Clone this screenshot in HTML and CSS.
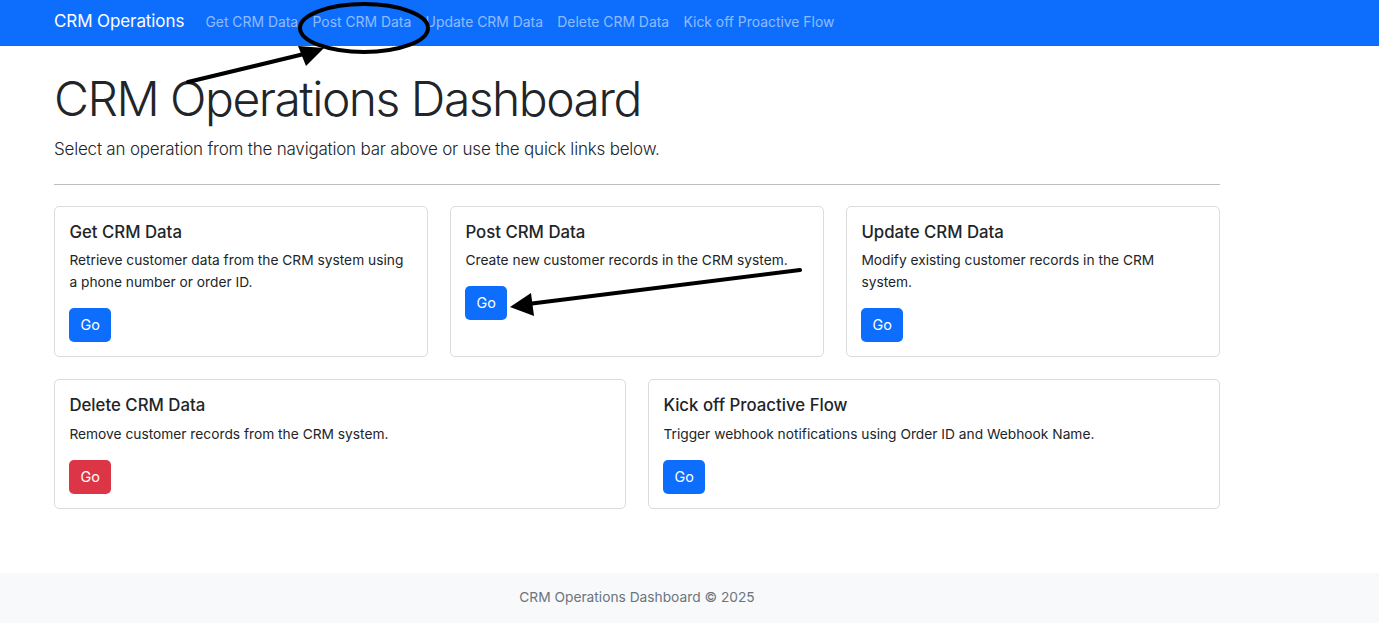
FILE: index.html
```html
<!DOCTYPE html>
<html lang="en">
<head>
<meta charset="utf-8">
<title>CRM Operations Dashboard</title>
<link rel="stylesheet" href="styles.css">
</head>
<body>
<nav class="navbar">
  <div class="nav-inner">
    <a class="brand" href="#">CRM Operations</a>
    <ul class="nav-links">
      <li><a href="#">Get CRM Data</a></li>
      <li><a href="#">Post CRM Data</a></li>
      <li><a href="#">Update CRM Data</a></li>
      <li><a href="#">Delete CRM Data</a></li>
      <li><a href="#">Kick off Proactive Flow</a></li>
    </ul>
  </div>
</nav>

<main class="container">
  <h1 class="display">CRM Operations Dashboard</h1>
  <p class="lead">Select an operation from the navigation bar above or use the quick links below.</p>
  <hr class="divider">

  <div class="row row-3">
    <div class="card">
      <h5 class="card-title">Get CRM Data</h5>
      <p class="card-text">Retrieve customer data from the CRM system using a phone number or order ID.</p>
      <a class="btn btn-primary" href="#">Go</a>
    </div>
    <div class="card">
      <h5 class="card-title">Post CRM Data</h5>
      <p class="card-text">Create new customer records in the CRM system.</p>
      <a class="btn btn-primary" href="#">Go</a>
    </div>
    <div class="card">
      <h5 class="card-title">Update CRM Data</h5>
      <p class="card-text">Modify existing customer records in the CRM system.</p>
      <a class="btn btn-primary" href="#">Go</a>
    </div>
  </div>

  <div class="row row-2">
    <div class="card">
      <h5 class="card-title">Delete CRM Data</h5>
      <p class="card-text">Remove customer records from the CRM system.</p>
      <a class="btn btn-danger" href="#">Go</a>
    </div>
    <div class="card">
      <h5 class="card-title">Kick off Proactive Flow</h5>
      <p class="card-text">Trigger webhook notifications using Order ID and Webhook Name.</p>
      <a class="btn btn-primary" href="#">Go</a>
    </div>
  </div>
</main>

<footer class="footer">
  <div class="footer-inner">CRM Operations Dashboard &copy; 2025</div>
</footer>

<svg class="annotations" width="1379" height="639" viewBox="0 0 1379 639" aria-hidden="true">
  <ellipse cx="364" cy="28" rx="64" ry="24" fill="none" stroke="#000" stroke-width="4"/>
  <line x1="188" y1="82" x2="304" y2="54" stroke="#000" stroke-width="4" stroke-linecap="round"/>
  <polygon points="324,48 298,46 306,66" fill="#000"/>
  <line x1="800" y1="270" x2="528" y2="304" stroke="#000" stroke-width="4" stroke-linecap="round"/>
  <polygon points="510,307 531,293 534,316" fill="#000"/>
</svg>
</body>
</html>
```

FILE: styles.css
```css
* { box-sizing: border-box; }

html, body {
  margin: 0;
  padding: 0;
  background: #fff;
}

body {
  font-family: Inter, "Noto Sans", "Liberation Sans", sans-serif;
  color: #212529;
  font-size: 14.4px;
  line-height: 1.5;
  position: relative;
  min-height: 639px;
}

a { text-decoration: none; }

.navbar {
  background: #0d6efd;
  height: 46px;
}

.nav-inner {
  margin-left: 54px;
  height: 44px;
  display: flex;
  align-items: center;
}

.brand {
  color: #fff;
  font-size: 17px;
  font-weight: 400;
  margin-right: 14px;
  letter-spacing: -0.1px;
}

.nav-links {
  list-style: none;
  margin: 0;
  padding: 0;
  display: flex;
}

.nav-links a {
  display: block;
  padding: 7px 7.2px;
  color: rgba(255, 255, 255, 0.55);
  font-size: 13.9px;
}

.container {
  width: 1166px;
  margin-left: 54px;
  padding-top: 23px;
  padding-bottom: 1px;
}

.display {
  font-size: 48px;
  font-weight: 300;
  line-height: 60px;
  margin: 0 0 7.6px 0;
  letter-spacing: -1.5px;
}

.lead {
  font-size: 17px;
  font-weight: 300;
  line-height: 1.5;
  margin: 0;
  letter-spacing: -0.2px;
}

.divider {
  margin: 21.6px 0;
  border: 0;
  border-top: 1px solid #bcbebf;
  height: 0;
}

.row {
  display: grid;
  gap: 22px;
  margin-bottom: 22px;
}

.row-3 { grid-template-columns: repeat(3, 1fr); }
.row-2 { grid-template-columns: repeat(2, 1fr); margin-bottom: 63px; }

.card {
  border: 1px solid #dcdcdc;
  border-radius: 5px;
  padding: 14.4px;
  background: #fff;
  display: flex;
  flex-direction: column;
  align-items: flex-start;
}

.card-title {
  font-size: 16.8px;
  font-weight: 500;
  line-height: 21.6px;
  margin: 0 0 7.2px 0;
}

.card-text {
  margin: 0 0 14.4px 0;
  font-size: 13.75px;
  line-height: 21.6px;
}

.btn {
  display: inline-block;
  color: #fff;
  font-size: 14.4px;
  line-height: 22px;
  padding: 6px 11px;
  border-radius: 5px;
  height: 34px;
}

.btn-primary { background: #0d6efd; }
.btn-danger { background: #dc3545; }

.footer {
  background: #f8f9fa;
  padding: 14.4px 0;
  height: 50px;
}

.footer-inner {
  width: 1166px;
  margin-left: 54px;
  text-align: center;
  color: #6c757d;
  font-size: 13.75px;
  line-height: 21.6px;
}

.annotations {
  position: absolute;
  left: 0;
  top: 0;
  pointer-events: none;
}
```
